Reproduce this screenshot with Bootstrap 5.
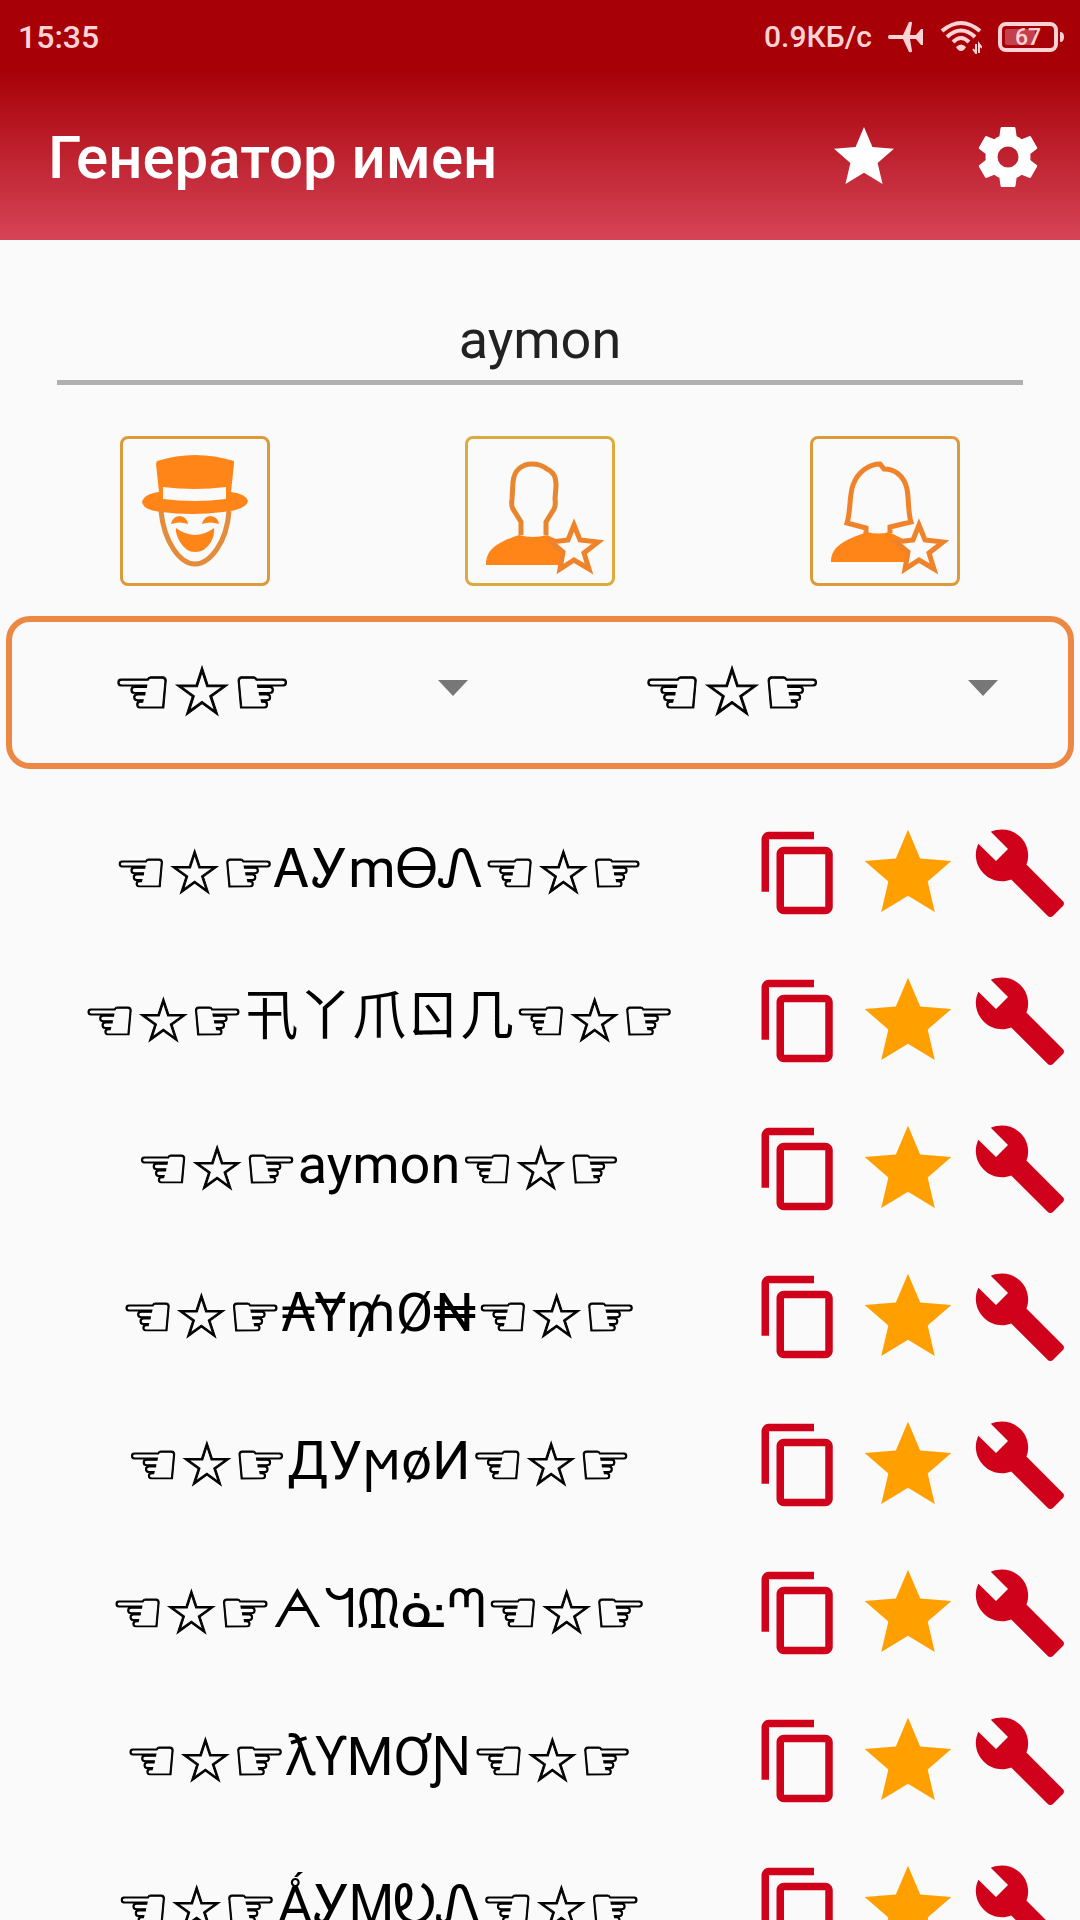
<!DOCTYPE html>
<html lang="ru">
<head>
<meta charset="utf-8">
<meta name="viewport" content="width=device-width, initial-scale=1">
<title>Генератор имен</title>
<link href="https://cdn.jsdelivr.net/npm/bootstrap@5.3.0/dist/css/bootstrap.min.css" rel="stylesheet">
<style>
body{font-family:Roboto,"Noto Sans","DejaVu Sans","Noto Sans CJK SC",sans-serif;background:#fafafa;color:#000}
.app-head{background:linear-gradient(#a70007 0,#a70007 70px,#d64457 100%);color:#fff}
.status-bar{height:72px;padding:2px 16px 0 18px;color:#ffd3d6;font-size:30px;line-height:40px;font-weight:500}
.clock{font-size:32px}
.status-icons{gap:16px}
.tool-bar{height:168px;padding:2px 36px 0 48px}
.app-title{font-size:60px;line-height:72px;font-weight:500;padding-top:2px}
.head-actions{gap:72px}
.bare-btn{border:0;background:none;padding:0;line-height:0;color:inherit}
.content-area{min-height:0}
.name-wrap{padding:58px 57px 0}
.name-input{border:0;border-bottom:5px solid #b0b0b0;border-radius:0;background:none;padding:0;font-size:54px;line-height:80px;height:87px;color:#222}
.name-input:focus{background:none;box-shadow:none}
.styles-row{padding:51px 120px 30px}
.style-btn{width:150px;height:150px;border:3px solid #dd9a3a;border-radius:8px;background:none;padding:0;line-height:0}
.style-btn.is-gold{border-color:#dcaa3e}
.frame-box{margin:0 6px;border:6px solid #ec8844;border-radius:24px;height:153px}
.frame-select{border:0;background:none;appearance:none;width:100%;height:141px;padding:0 0 0 100px;font-size:67px;color:#000;font-family:"DejaVu Sans",sans-serif;-webkit-text-stroke:1px #000}
.frame-caret{right:70px;top:58px;pointer-events:none}
.names{padding-top:30px;overflow-y:auto;scrollbar-width:none;min-height:0}
.names::-webkit-scrollbar{display:none}
.name-row{height:148px;padding:0 12px 0 16px;gap:12px}
.name-text{font-size:54px;line-height:72px;padding-bottom:8px}
.deco{font-family:"DejaVu Sans",sans-serif;font-size:60px;line-height:1;vertical-align:-6px;-webkit-text-stroke:1px #000}
.c-red{color:#d0021b}.c-amber{color:#ffa000}
</style>
</head>
<body>
<svg class="d-none" aria-hidden="true">
<symbol id="i-star" viewBox="0 0 24 24"><path fill="currentColor" d="M12 17.27 18.18 21l-1.64-7.03L22 9.24l-7.19-.61L12 2 9.19 8.63 2 9.24l5.46 4.73L5.82 21z"/></symbol>
<symbol id="i-copy" viewBox="0 0 24 24"><path fill="currentColor" d="M16 1H4c-1.100 0-2 .9-2 2v14h2V3h12V1zm3 4H8c-1.100 0-2 .9-2 2v14c0 1.100.9 2 2 2h11c1.100 0 2-.9 2-2V7c0-1.100-.9-2-2-2zm0 16H8V7h11v14z"/></symbol>
<symbol id="i-tool" viewBox="0 0 24 24"><path fill="currentColor" d="M22.700 19l-9.100-9.100c.9-2.300.4-5-1.500-6.900-2-2-5-2.400-7.400-1.300L9 6 6 9 1.600 4.700C.4 7.100.9 10.100 2.900 12.100c1.900 1.900 4.600 2.400 6.900 1.500l9.100 9.100c.4.4 1 .4 1.400 0l2.300-2.300c.5-.4.5-1.100.1-1.400z"/></symbol>
</svg>
<div class="d-flex flex-column vh-100 overflow-hidden">
<header class="app-head flex-shrink-0">
  <div class="status-bar d-flex justify-content-between align-items-center">
    <span class="clock">15:35</span>
    <div class="status-icons d-flex align-items-center">
      <span>0.9КБ/с</span>
      <svg width="36" height="32" viewBox="0 0 36 32" fill="currentColor"><path d="M1 14h14L21 1q3-1 3 1l-2 12h6l5-6h2v16h-2l-5-6h-6l2 12q0 2-3 1l-6-13H1q-2-2 0-4z"/></svg>
      <svg width="42" height="34" viewBox="0 0 42 34" fill="none" stroke="currentColor" stroke-width="4"><path d="M2 11Q21-5 40 11M7 17Q21 4 35 17M13 22Q21 14 29 22"/><path d="M16 27q5-5 10 0-2 4-5 4t-5-4z" fill="currentColor" stroke="none"/><path d="M36 24v9l-3-4M39 33v-9l3 4" stroke-width="2"/></svg>
      <svg width="66" height="30" viewBox="0 0 66 30"><rect x="2" y="2" width="56" height="26" rx="6" fill="none" stroke="currentColor" stroke-width="4"/><rect x="7" y="7" width="30" height="16" rx="2" fill="#c4404c"/><path d="M62 10q4 0 4 5t-4 5z" fill="currentColor"/><text x="30" y="23" text-anchor="middle" font-size="23" font-weight="500" fill="currentColor">67</text></svg>
    </div>
  </div>
  <div class="tool-bar d-flex justify-content-between align-items-center">
    <h1 class="app-title m-0">Генератор имен</h1>
    <div class="head-actions d-flex">
      <button class="bare-btn" aria-label="Избранное"><svg width="72" height="72"><use href="#i-star"/></svg></button>
      <button class="bare-btn" aria-label="Настройки"><svg width="72" height="72" viewBox="0 0 24 24" fill="currentColor"><path d="M19.430 12.980c.04-.32.07-.64.07-.98s-.03-.66-.07-.98l2.110-1.650c.19-.15.24-.42.12-.64l-2-3.460c-.12-.22-.39-.3-.61-.22l-2.490 1c-.52-.4-1.080-.73-1.690-.98l-.38-2.650C14.460 2.180 14.250 2 14 2h-4c-.25 0-.46.18-.49.42l-.38 2.650c-.61.25-1.170.59-1.690.98l-2.490-1c-.23-.09-.49 0-.61.22l-2 3.460c-.13.22-.07.49.12.64l2.110 1.650c-.04.32-.07.65-.07.98s.03.66.07.98l-2.110 1.650c-.19.15-.24.42-.12.64l2 3.460c.12.22.39.3.61.22l2.490-1c.52.4 1.080.73 1.690.98l.38 2.650c.03.24.24.42.49.42h4c.25 0 .46-.18.49-.42l.38-2.650c.61-.25 1.170-.59 1.690-.98l2.490 1c.23.09.49 0 .61-.22l2-3.460c.12-.22.07-.49-.12-.64l-2.110-1.650zM12 15.500a3.500 3.500 0 1 1 0-7 3.500 3.500 0 0 1 0 7z"/></svg></button>
    </div>
  </div>
</header>
<main class="content-area d-flex flex-column flex-fill">
  <div class="name-wrap"><input class="form-control name-input text-center" type="text" value="aymon" aria-label="Имя"></div>
  <div class="styles-row d-flex justify-content-between">
    <button class="style-btn" aria-label="Маска"><svg width="144" height="144" viewBox="3 3 144 144"><g fill="#ff8519"><path d="M37 25q38-12 77 0v3l-3 28q15 2 17 9-2 9-25 11-31 4-62 0-18-2-19-10 2-8 17-10l-3-28z"/><path fill="#fafafa" d="M43 51q31 4 63 0v12q-31 4-63 0z"/><path d="M51 88q2-8 9-8 7 1 8 8-9-3-17 0zM82 88q2-8 9-8 7 1 8 8-9-3-17 0zM56 92q19 14 38 0 1 6-3 14-6 10-16 10-9 0-15-10-5-9-4-14z"/></g><path d="M41 75C44 106 60 128 75 128S107 106 109 75" fill="none" stroke="#e58c3a" stroke-width="5"/></svg></button>
    <button class="style-btn is-gold" aria-label="Мужские имена"><svg width="144" height="144" viewBox="3 3 144 144"><path d="M21 129c0-17 13-23 33-30q14 4 28 0l13 6 9 24z" fill="#ff8519"/><path d="M56 99V86L48 73Q46 70 47 63L48 46C49 34 57 28 67 28q9 0 15 5c7 3 9 8 9 17l-1 13q1 6-1 10l-8 13v13" fill="none" stroke="#e8862f" stroke-width="5"/><path d="m109 89 6 15 18 2-14 11 5 16-15-9-14 9 3-17-12-10 17-2z" fill="#fafafa" stroke="#f0832a" stroke-width="5"/></svg></button>
    <button class="style-btn" aria-label="Женские имена"><svg width="144" height="144" viewBox="3 3 144 144"><path d="M21 126c0-16 14-22 36-30q12 3 22 0l18 9 9 21z" fill="#ff8519"/><path d="M56 98v-6l-19-5c4-13 2-27 6-38 5-14 17-21 27-21l4 5c10 0 20 6 23 20 2 11 1 24 4 33l-21 5v6" fill="none" stroke="#f0832a" stroke-width="5"/><path d="m109 89 6 15 18 2-14 11 5 16-15-9-14 9 3-17-12-10 17-2z" fill="#fafafa" stroke="#f0832a" stroke-width="5"/></svg></button>
  </div>
  <div class="frame-box d-flex flex-shrink-0 gap-1">
    <div class="col position-relative"><select class="frame-select" aria-label="Начало"><option>☜☆☞</option></select><svg class="frame-caret position-absolute" width="30" height="16"><path d="M0 0h30L15 16z" fill="#777"/></svg></div>
    <div class="col position-relative"><select class="frame-select" aria-label="Конец"><option>☜☆☞</option></select><svg class="frame-caret position-absolute" width="30" height="16"><path d="M0 0h30L15 16z" fill="#777"/></svg></div>
  </div>
  <div class="names flex-fill" id="names"></div>
</main>
</div>
<script src="https://cdn.jsdelivr.net/npm/bootstrap@5.3.0/dist/js/bootstrap.bundle.min.js"></script>
<script>
const names=["ᎪᎩmᎾᏁ","卂丫爪ㄖ几","aymon","₳Ɏ₥Ø₦","ДУϻøИ","ᗅᖻᙢᓎᘉ","ƛƳMƠƝ","ǺᎩᎷᎧᏁ"];
document.getElementById("names").innerHTML=names.map(n=>`
<div class="name-row d-flex align-items-center">
  <div class="name-text flex-fill text-center text-nowrap"><span class="deco">☜☆☞</span>${n}<span class="deco">☜☆☞</span></div>
  <button class="bare-btn c-red" aria-label="Копировать"><svg width="90" height="90"><use href="#i-copy"/></svg></button>
  <button class="bare-btn c-amber" aria-label="В избранное"><svg width="104" height="104"><use href="#i-star"/></svg></button>
  <button class="bare-btn c-red" aria-label="Изменить"><svg width="96" height="96"><use href="#i-tool"/></svg></button>
</div>`).join("");
</script>
</body>
</html>
